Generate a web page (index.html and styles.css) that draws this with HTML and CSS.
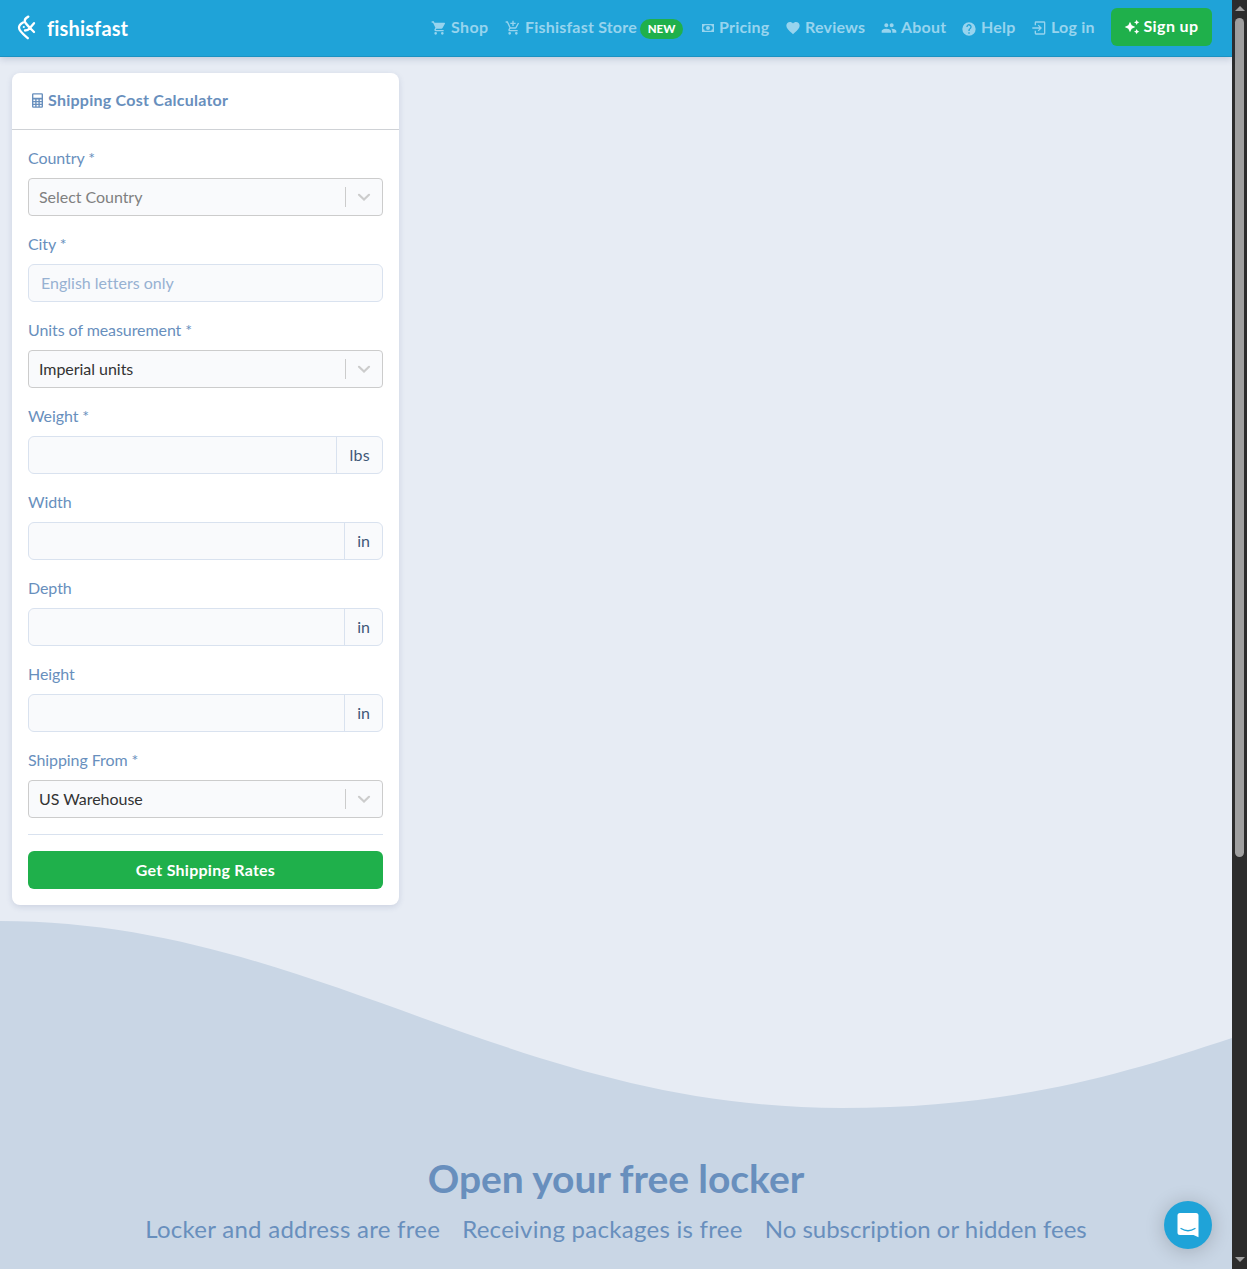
FILE: index.html
```
<!DOCTYPE html>
<html lang="en">
<head>
<meta charset="utf-8">
<title>fishisfast</title>
<link rel="stylesheet" href="styles.css">
</head>
<body>
<div class="page">
<header class="navbar">
  <a class="brand"><svg class="logo" viewBox="0 0 20 26"><path d="M11.300 1.600C8.500 3 7.300 5 8 7C8.800 9 11 11 17 17M17 8.200L12.500 13.500Q11 15.500 8 15.500M6 7.500Q2 9.500 2 12.800C2 16 7 20 10.800 23.200"/><circle cx="6.800" cy="12" r="1.100"/></svg><span>fishisfast</span></a>
  <nav class="nav">
    <a class="item shop"><svg class="icon" viewBox="0 0 24 24"><path d="M17 18a2 2 0 1 0 0 4 2 2 0 0 0 0-4M1 2v2h2l3.600 7.590-1.360 2.450C4.520 15.370 5.480 17 7 17h12v-2H7.420a.25.25 0 0 1-.25-.25l.93-1.750h7.450c.75 0 1.410-.42 1.750-1.030l3.580-6.470A1 1 0 0 0 20 4H5.210l-.94-2M7 18a2 2 0 1 0 0 4 2 2 0 0 0 0-4z"/></svg><span>Shop</span></a>
    <a class="item store"><svg class="icon" viewBox="0 0 24 24"><path d="M11 9h2V6h3V4h-3V1h-2v3H8v2h3M7 18a2 2 0 1 0 0 4 2 2 0 0 0 0-4m10 0a2 2 0 1 0 0 4 2 2 0 0 0 0-4m-9.830-3.250l.03-.12.900-1.630h7.450c.75 0 1.410-.41 1.750-1.030l3.860-7.010L19.420 4l-1.100 2-2.760 5H8.530l-.13-.27L6.160 6l-.95-2-.94-2H1v2h2l3.600 7.590-1.350 2.450C4.520 15.370 5.480 17 7 17h12v-2H7.420a.25.25 0 0 1-.25-.25z"/></svg><span>Fishisfast Store</span><b class="badge">NEW</b></a>
    <a class="item pricing"><svg class="icon" viewBox="0 0 24 24"><path fill-rule="evenodd" d="M3 6h18v12H3zM7 8a2 2 0 0 1-2 2v4a2 2 0 0 1 2 2h10a2 2 0 0 1 2-2v-4a2 2 0 0 1-2-2z"/><circle cx="12" cy="12" r="3"/></svg><span>Pricing</span></a>
    <a class="item reviews"><svg class="icon" viewBox="0 0 24 24"><path d="M12 21.350l-1.450-1.320C5.400 15.360 2 12.270 2 8.500 2 5.410 4.420 3 7.500 3c1.740 0 3.410.81 4.500 2.080C13.090 3.810 14.760 3 16.500 3 19.580 3 22 5.410 22 8.500c0 3.770-3.400 6.860-8.550 11.530z"/></svg><span>Reviews</span></a>
    <a class="item about"><svg class="icon" viewBox="0 0 24 24"><path d="M16 11c1.660 0 3-1.340 3-3s-1.340-3-3-3-3 1.340-3 3 1.340 3 3 3m-8 0c1.660 0 3-1.340 3-3S9.660 5 8 5 5 6.340 5 8s1.340 3 3 3m0 2c-2.330 0-7 1.170-7 3.500V19h14v-2.500C15 14.170 10.330 13 8 13m8 0c-.29 0-.62.020-.97.050 1.160.84 1.970 1.970 1.970 3.450V19h6v-2.500c0-2.330-4.670-3.500-7-3.500"/></svg><span>About</span></a>
    <a class="item help"><svg class="icon" viewBox="0 0 24 24"><path d="M15.070 11.250l-.9.920C13.450 12.890 13 13.500 13 15h-2v-.5c0-1.110.45-2.110 1.170-2.830l1.240-1.260A2 2 0 1 0 10 9H8a4 4 0 1 1 7.070 2.250M13 19h-2v-2h2M12 2a10 10 0 1 0 0 20 10 10 0 0 0 0-20z"/></svg><span>Help</span></a>
    <a class="item login"><svg class="icon" viewBox="0 0 24 24"><path d="M19.500 2h-12a2 2 0 0 0-2 2v4h2V4h12v16h-12v-4h-2v4a2 2 0 0 0 2 2h12a2 2 0 0 0 2-2V4a2 2 0 0 0-2-2M10.100 15.600L11.500 17l5-5-5-5-1.400 1.400 2.600 2.600H2v2h10.700z"/></svg><span>Log in</span></a>
    <a class="signup"><svg class="icon" viewBox="0 0 24 24"><path d="M19 1l-1.260 2.750L15 5l2.740 1.260L19 9l1.250-2.740L23 5l-2.750-1.250M9 4L6.500 9.500 1 12l5.500 2.500L9 20l2.500-5.500L17 12l-5.500-2.500M19 15l-1.260 2.740L15 19l2.740 1.250L19 23l1.250-2.750L23 19l-2.750-1.260"/></svg><span>Sign up</span></a>
  </nav>
</header>
<main class="main">
  <section class="card">
    <h2 class="card-title"><svg class="calc" viewBox="0 0 12 16"><path fill-rule="evenodd" d="M1.500 0h9A1.500 1.500 0 0 1 12 1.500v13a1.500 1.500 0 0 1-1.500 1.500h-9A1.500 1.500 0 0 1 0 14.500v-13A1.500 1.500 0 0 1 1.500 0M1.500 1.500V5h9V1.500zM1.500 7v1.500h2V7zM5 7v1.500h2V7zM8.500 7v1.500h2V7zM1.500 10v1.500h2V10zM5 10v1.500h2V10zM8.500 10v1.500h2V10zM1.500 13v1.500h2V13zM5 13v1.500h2V13zM8.500 13v1.500h2V13z"/></svg><span>Shipping Cost Calculator</span></h2>
    <div class="form">
      <div class="field"><label>Country *</label><div class="select placeholder"><span>Select Country</span><i class="arrow"><svg viewBox="0 0 20 20"><path d="M5 7.800l5 4.700 5-4.700"/></svg></i></div></div>
      <div class="field"><label>City *</label><div class="input">English letters only</div></div>
      <div class="field"><label>Units of measurement *</label><div class="select"><span>Imperial units</span><i class="arrow"><svg viewBox="0 0 20 20"><path d="M5 7.800l5 4.700 5-4.700"/></svg></i></div></div>
      <div class="field"><label>Weight *</label><div class="input group"><span class="unit wide">lbs</span></div></div>
      <div class="field"><label>Width</label><div class="input group"><span class="unit">in</span></div></div>
      <div class="field"><label>Depth</label><div class="input group"><span class="unit">in</span></div></div>
      <div class="field"><label>Height</label><div class="input group"><span class="unit">in</span></div></div>
      <div class="field last"><label>Shipping From *</label><div class="select"><span>US Warehouse</span><i class="arrow"><svg viewBox="0 0 20 20"><path d="M5 7.800l5 4.700 5-4.700"/></svg></i></div></div>
      <hr>
      <div class="submit">Get Shipping Rates</div>
    </div>
  </section>
</main>
<svg class="wave" viewBox="0 0 1232 188" preserveAspectRatio="none"><path d="M0 0C310 0 510 187 842 187C1010 187 1120 154 1232 117V188H0z"/></svg>
<section class="locker">
  <h1>Open your free locker</h1>
  <div class="perks"><span class="p1">Locker and address are free</span><span class="p2">Receiving packages is free</span><span class="p3">No subscription or hidden fees</span></div>
</section>
<div class="chat"><svg viewBox="0 0 24 26"><path class="bubble" d="M4 1h16a2.500 2.500 0 0 1 2.500 2.500V25.300L17.500 23H4a2.500 2.500 0 0 1-2.500-2.500v-17A2.500 2.500 0 0 1 4 1z"/><path class="smile" d="M5 16.500Q12 21 19 16.500"/></svg></div>
</div>
<aside class="scroll"><i class="up"></i><i class="thumb"></i><i class="down"></i></aside>
</body>
</html>
```

FILE: styles.css
```
* { box-sizing: border-box; }
body {
  margin: 0; height: 1269px; overflow: hidden; display: flex;
  background: #e7ecf4; color: #688fbd;
  font: 16px/24px Lato, "Liberation Sans", sans-serif;
  font-variant-ligatures: none;
}
.page { width: 1232px; height: 1269px; position: relative; display: flex; flex-direction: column; }
.navbar {
  height: 57px; flex: none; display: flex; align-items: center; justify-content: space-between;
  padding: 0 20px 0 17px; background: #1fa3d8; border-bottom: 1px solid #1b92c2;
  box-shadow: 0 2px 7px rgba(40, 60, 110, .2);
}
.brand { display: flex; align-items: center; gap: 10px; color: #fff; font-size: 20px; font-weight: 700; letter-spacing: .15px; }
.logo { width: 20px; height: 26px; fill: none; stroke: #fff; stroke-width: 2.3; stroke-linecap: round; }
.logo circle { fill: #fff; stroke: none; }
.nav { display: flex; align-items: center; gap: 16px; font-weight: 700; letter-spacing: .2px; white-space: nowrap; }
.nav span { padding-bottom: 2px; }
.item { display: flex; align-items: center; gap: 4px; color: #97d4ee; }
.icon { width: 16px; height: 16px; fill: currentColor; flex: none; }
.shop { width: 58px; letter-spacing: .4px; }
.store { width: 179px; }
.store span { width: 111px; }
.pricing { width: 69px; gap: 3px; }
.reviews { width: 80px; }
.about { width: 64px; }
.help { width: 54px; }
.help .icon { margin-top: 2px; }
.login { width: 64px; }
.badge { width: 43px; height: 20px; border-radius: 10px; background: #1fb04b; color: #fff; font-size: 11.5px; line-height: 20px; text-align: center; letter-spacing: 0; margin-top: 2px; }
.signup { width: 101px; height: 38px; margin-top: -2px; display: flex; align-items: center; justify-content: center; gap: 3px; border-radius: 6px; background: #1fb04b; color: #fff; letter-spacing: .4px; }
.main { height: 864px; flex: none; padding: 16px 12px; }
.card { width: 387px; height: 832px; background: #fff; border-radius: 8px; box-shadow: 0 2px 6px rgba(40, 60, 110, .14); }
.card-title { margin: 0; height: 57px; padding: 0 20px 2px; display: flex; align-items: center; gap: 5px; border-bottom: 1px solid #cfd2d6; font-size: 16px; letter-spacing: .25px; }
.calc { width: 11px; height: 15px; fill: currentColor; }
.form { padding: 16px; }
.field { height: 86px; }
.last { height: 70px; }
label { display: block; height: 32px; line-height: 24px; padding-bottom: 8px; letter-spacing: -.08px; }
.select, .input { height: 38px; background: #f9fafc; display: flex; align-items: center; }
.select { border: 1px solid #ccc; border-radius: 4px; padding-left: 10px; justify-content: space-between; color: #333; letter-spacing: -.04px; }
.placeholder { color: #808080; }
.arrow { width: 37px; height: 20px; border-left: 1px solid #ccc; display: flex; justify-content: center; align-items: center; }
.arrow svg { width: 20px; height: 20px; fill: none; stroke: #ccc; stroke-width: 2.2; stroke-linecap: round; }
.input { border: 1px solid #d9e2ef; border-radius: 6px; padding-left: 12px; color: #97b1d2; }
.group { justify-content: flex-end; }
.unit { height: 36px; line-height: 36px; padding: 0 12px; border-left: 1px solid #d9e2ef; color: #3f5878; }
.wide { letter-spacing: .3px; }
hr { height: 1px; border: 0; margin: 16px 0; background: #d9e2ef; }
.form .last { height: 70px; }
.submit { height: 38px; line-height: 37px; border-radius: 6px; background: #1fb04b; color: #fff; font-weight: 700; letter-spacing: .25px; text-align: center; }
.last + hr { margin-top: 16px; }
.wave { display: block; width: 1232px; height: 188px; flex: none; fill: #c9d6e5; }
.locker { flex: 1; background: #c9d6e5; text-align: center; }
h1 { margin: 45px 0 0; font-size: 39px; line-height: 48px; letter-spacing: -.05px; }
.perks { display: flex; justify-content: center; gap: 22px; font-size: 24px; line-height: 36px; margin-top: 9px; white-space: nowrap; }
.p1, .p2 { letter-spacing: .27px; }
.chat { position: absolute; left: 1164px; top: 1201px; width: 48px; height: 48px; border-radius: 50%; background: #1fa3d8; display: flex; align-items: center; justify-content: center; box-shadow: 0 2px 20px rgba(0, 0, 0, .2); }
.chat svg { width: 24px; height: 26px; }
.bubble { fill: #fff; }
.smile { fill: none; stroke: #1fa3d8; stroke-width: 1.3; stroke-linecap: round; }
.scroll { width: 15px; height: 1269px; background: #2c2c2c; display: flex; flex-direction: column; align-items: center; }
.up, .down { border: 5px solid transparent; }
.up { border-top: 0; border-bottom-color: #9f9f9f; margin-top: 6px; }
.thumb { width: 9px; height: 839px; background: #9f9f9f; border-radius: 5px; margin-top: 7px; }
.down { border-bottom: 0; border-top-color: #9f9f9f; margin-top: auto; margin-bottom: 7px; }
```
